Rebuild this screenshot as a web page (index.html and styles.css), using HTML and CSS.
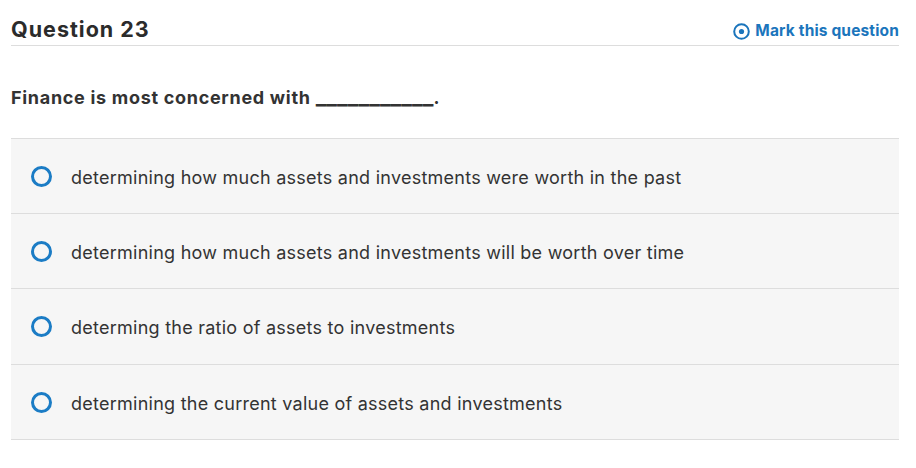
FILE: index.html
```html
<!DOCTYPE html>
<html>
<head>
<meta charset="utf-8">
<link rel="stylesheet" href="styles.css">
</head>
<body>
<div class="page">
  <div class="header">
    <h1 class="title">Question 23</h1>
    <a class="mark">
      <svg class="mark-icon" width="17" height="17" viewBox="0 0 17 17"><circle cx="8.5" cy="8.5" r="7.3" fill="none" stroke="#1b75bc" stroke-width="2"/><circle cx="8.5" cy="8.5" r="2.6" fill="#1b75bc"/></svg>
      <span>Mark this question</span>
    </a>
  </div>
  <p class="prompt">Finance is most concerned with <span class="blank">___________</span>.</p>
  <div class="options">
    <div class="option"><span class="radio"></span><span class="label">determining how much assets and investments were worth in the past</span></div>
    <div class="option"><span class="radio"></span><span class="label">determining how much assets and investments will be worth over time</span></div>
    <div class="option tall"><span class="radio"></span><span class="label">determing the ratio of assets to investments</span></div>
    <div class="option"><span class="radio"></span><span class="label">determining the current value of assets and investments</span></div>
  </div>
</div>
</body>
</html>
```

FILE: styles.css
```css
html, body {
  margin: 0;
  padding: 0;
  background: #fff;
}
body {
  font-family: "Inter", "Open Sans", sans-serif;
  color: #333;
}
.page {
  width: 888px;
  margin-left: 11px;
}
.header {
  display: flex;
  align-items: flex-end;
  justify-content: space-between;
  height: 46px;
  border-bottom: 1px solid #ddd;
  box-sizing: border-box;
}
.title {
  margin: 0;
  font-size: 21.5px;
  font-weight: 700;
  letter-spacing: 1px;
  line-height: 28px;
  padding-bottom: 2px;
  color: #2b2b2b;
}
.mark {
  display: flex;
  align-items: center;
  gap: 5px;
  color: #1b75bc;
  font-weight: 700;
  font-size: 15.5px;
  letter-spacing: 0.15px;
  padding-bottom: 4px;
  line-height: 20px;
}
.mark-icon {
  display: block;
}
.prompt {
  margin: 0;
  padding-top: 40px;
  height: 52px;
  box-sizing: content-box;
  font-size: 18px;
  font-weight: 700;
  letter-spacing: 0.7px;
  line-height: 20px;
}
.blank {
  font-size: 22.5px;
  letter-spacing: 0;
  line-height: 20px;
}
.options {
  border-top: 1px solid #ddd;
}
.option {
  display: flex;
  align-items: center;
  height: 74px;
  background: #f6f6f6;
  border-bottom: 1px solid #ddd;
  padding-left: 20px;
}
.option.tall {
  height: 75px;
}
.radio {
  width: 15px;
  height: 15px;
  border: 3px solid #1b7cc5;
  border-radius: 50%;
  flex: none;
}
.label {
  margin-left: 19px;
  font-size: 18px;
  letter-spacing: 0.25px;
  line-height: 20px;
  color: #333;
  padding-top: 3px;
}
```
